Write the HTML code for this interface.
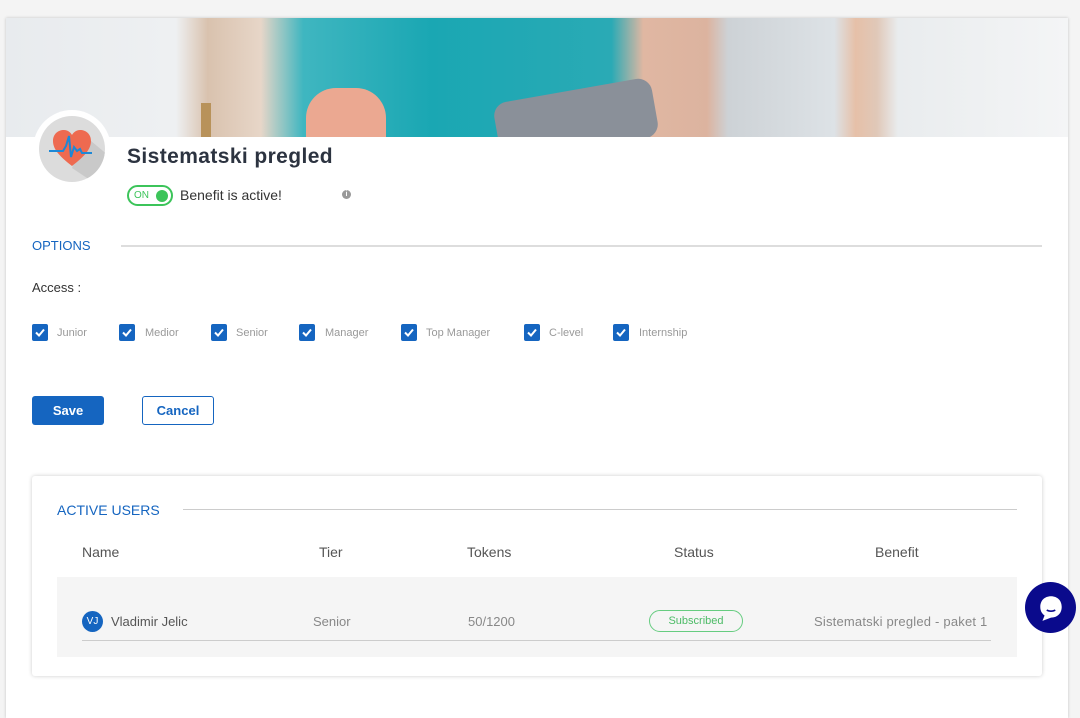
<!DOCTYPE html>
<html><head><meta charset="utf-8"><style>
*{box-sizing:border-box;margin:0;padding:0}
body{width:1080px;height:649px;overflow:hidden;background:#f4f4f4;font-family:"Liberation Sans",sans-serif;position:relative}
.abs{position:absolute}
.card{left:6px;top:18px;width:1062px;height:700px;background:#fff;box-shadow:0 0 3px rgba(0,0,0,.2)}
.banner{left:6px;top:18px;width:1062px;height:119px;overflow:hidden;background:linear-gradient(90deg,#e8ebee 0%,#eef0f2 16%,#d9c2ae 19%,#e7d6c8 24%,#3fb6c0 28%,#1aa7b3 40%,#2aaab5 57%,#e0b7a2 60%,#dcb39f 66%,#cdd2d6 68%,#dde2e6 78%,#e6c0a8 80%,#e0c8b8 82%,#e9ecee 84%,#f4f5f6 100%)}
.cb{width:16px;height:17px;background:#1565c0;border-radius:2px;top:324px}
.cb svg{position:absolute;left:3px;top:4px}
.lbl{top:327px;font-size:11px;color:#999}
.th{top:544px;font-size:14px;color:#555}
.td{top:614px;font-size:13px;color:#888}
</style></head><body>
<div class="abs card"></div>
<div class="abs banner">
  <div class="abs" style="left:490px;top:72px;width:160px;height:60px;background:#8a9099;border-radius:14px;transform:rotate(-10deg)"></div>
  <div class="abs" style="left:300px;top:70px;width:80px;height:60px;background:#eba891;border-radius:30px 30px 0 0"></div>
  <div class="abs" style="left:195px;top:85px;width:10px;height:50px;background:#b8925a"></div>
</div>
<div class="abs" style="left:33px;top:110px;width:78px;height:78px;border-radius:50%;background:#fff"></div>
<div class="abs" style="left:39px;top:116px;width:66px;height:66px;border-radius:50%;background:#dcdcdc;overflow:hidden">
<svg width="66" height="66" viewBox="0 0 66 66"><path d="M33 52 L60 70 L70 40 L46 20Z" fill="#c9c9c9"/><path d="M33 50 C20 40 14 33 14 25 C14 18 19 14 25 14 C29 14 32 17 33 19 C34 17 37 14 41 14 C47 14 52 18 52 25 C52 33 46 40 33 50Z" fill="#ee6a50"/><path d="M10 35 H24 L27 30 L30 20 L32 41 L35 31 L38 35 L41 33 L43 37 H53" fill="none" stroke="#1e88d6" stroke-width="2"/></svg></div>
<div class="abs" style="left:127px;top:145px;font-size:21px;font-weight:bold;color:#2c3340;letter-spacing:0.4px">Sistematski pregled</div>
<div class="abs" style="left:127px;top:185px;width:46px;height:21px;border:2px solid #3cc45a;border-radius:11px"><span class="abs" style="left:5px;top:3px;font-size:10px;color:#3cc45a">ON</span><span class="abs" style="left:27px;top:3px;width:12px;height:12px;border-radius:50%;background:#3cc45a"></span></div>
<div class="abs" style="left:180px;top:187px;font-size:14px;color:#333">Benefit is active!</div>
<div class="abs" style="left:342px;top:190px;width:9px;height:9px;border-radius:50%;background:#999;color:#fff;font-size:7px;text-align:center;line-height:9px;font-weight:bold">i</div>
<div class="abs" style="left:32px;top:238px;font-size:13px;color:#1565c0">OPTIONS</div>
<div class="abs" style="left:121px;top:245px;width:921px;height:2px;background:#ddd"></div>
<div class="abs" style="left:32px;top:280px;font-size:13px;color:#333">Access :</div>
<div class="abs cb" style="left:32px"><svg width="10" height="9"><path d="M1 4.5 L4 7.5 L9 1.5" fill="none" stroke="#fff" stroke-width="2"/></svg></div><div class="abs lbl" style="left:57px">Junior</div>
<div class="abs cb" style="left:119px"><svg width="10" height="9"><path d="M1 4.5 L4 7.5 L9 1.5" fill="none" stroke="#fff" stroke-width="2"/></svg></div><div class="abs lbl" style="left:145px">Medior</div>
<div class="abs cb" style="left:211px"><svg width="10" height="9"><path d="M1 4.5 L4 7.5 L9 1.5" fill="none" stroke="#fff" stroke-width="2"/></svg></div><div class="abs lbl" style="left:236px">Senior</div>
<div class="abs cb" style="left:299px"><svg width="10" height="9"><path d="M1 4.5 L4 7.5 L9 1.5" fill="none" stroke="#fff" stroke-width="2"/></svg></div><div class="abs lbl" style="left:325px">Manager</div>
<div class="abs cb" style="left:401px"><svg width="10" height="9"><path d="M1 4.5 L4 7.5 L9 1.5" fill="none" stroke="#fff" stroke-width="2"/></svg></div><div class="abs lbl" style="left:426px">Top Manager</div>
<div class="abs cb" style="left:524px"><svg width="10" height="9"><path d="M1 4.5 L4 7.5 L9 1.5" fill="none" stroke="#fff" stroke-width="2"/></svg></div><div class="abs lbl" style="left:549px">C-level</div>
<div class="abs cb" style="left:613px"><svg width="10" height="9"><path d="M1 4.5 L4 7.5 L9 1.5" fill="none" stroke="#fff" stroke-width="2"/></svg></div><div class="abs lbl" style="left:639px">Internship</div>
<div class="abs" style="left:32px;top:396px;width:72px;height:29px;background:#1565c0;border-radius:3px;color:#fff;font-size:13px;font-weight:bold;text-align:center;line-height:29px">Save</div>
<div class="abs" style="left:142px;top:396px;width:72px;height:29px;border:1px solid #1565c0;border-radius:3px;color:#1565c0;font-size:13px;font-weight:bold;text-align:center;line-height:27px">Cancel</div>
<div class="abs" style="left:32px;top:476px;width:1010px;height:200px;background:#fff;box-shadow:0 0 4px rgba(0,0,0,.2);border-radius:3px"></div>
<div class="abs" style="left:57px;top:502px;font-size:14px;color:#1565c0">ACTIVE USERS</div>
<div class="abs" style="left:183px;top:509px;width:834px;height:1px;background:#ccc"></div>
<div class="abs th" style="left:82px">Name</div>
<div class="abs th" style="left:319px">Tier</div>
<div class="abs th" style="left:467px">Tokens</div>
<div class="abs th" style="left:674px">Status</div>
<div class="abs th" style="left:875px">Benefit</div>
<div class="abs" style="left:57px;top:577px;width:960px;height:80px;background:#f5f5f5"></div>
<div class="abs" style="left:82px;top:611px;width:21px;height:21px;border-radius:50%;background:#1565c0;color:#fff;font-size:10px;text-align:center;line-height:21px">VJ</div>
<div class="abs td" style="left:111px;color:#555">Vladimir Jelic</div>
<div class="abs td" style="left:313px">Senior</div>
<div class="abs td" style="left:468px">50/1200</div>
<div class="abs" style="left:649px;top:610px;width:94px;height:22px;border:1px solid #66cc80;border-radius:11px;color:#4cbb66;font-size:11px;text-align:center;line-height:20px">Subscribed</div>
<div class="abs td" style="left:814px;letter-spacing:0.2px">Sistematski pregled - paket 1</div>
<div class="abs" style="left:82px;top:640px;width:909px;height:1px;background:#ccc"></div>
<div class="abs" style="left:1025px;top:582px;width:51px;height:51px;border-radius:50%;background:#0a0a8c"></div>
<svg class="abs" style="left:1036px;top:593px" width="30" height="30" viewBox="0 0 28 28"><path d="M14 3 C20 3 24 7 24 13 C24 19 20 23 14 23 L6 26 L8 21 C5 19 4 16 4 13 C4 7 8 3 14 3Z" fill="#fff"/><path d="M10 16 Q14 18 18 16" stroke="#0a0a8c" stroke-width="1.5" fill="none"/></svg>
</body></html>
